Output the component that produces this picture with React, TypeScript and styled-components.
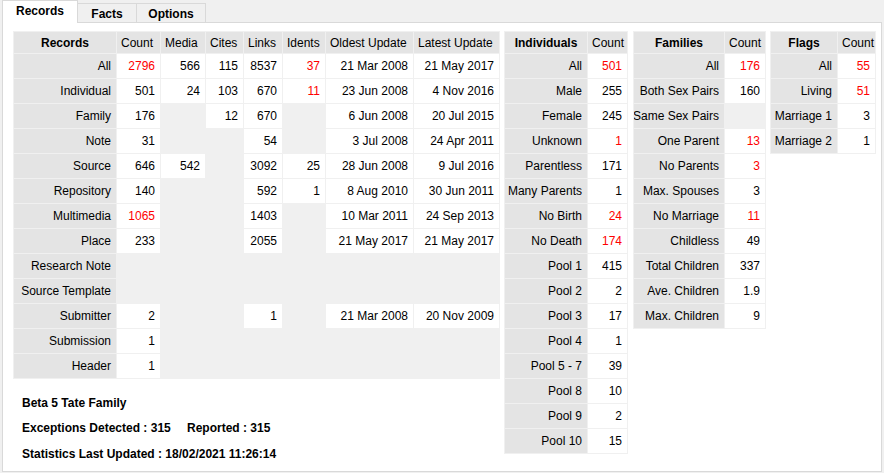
import React from "react";
import styled, { createGlobalStyle, css } from "styled-components";

const GlobalStyle = createGlobalStyle`
  html, body { margin: 0; padding: 0; background: #f0f0f0; }
  body {
    font-family: "Liberation Sans", Arial, sans-serif;
    font-size: 12px;
    color: #000;
  }
  * { box-sizing: border-box; }
`;

const Root = styled.div`
  width: 884px;
  height: 473px;
  padding: 0 0 0 2px;
  overflow: hidden;
`;

const TabStrip = styled.div`
  display: flex;
  align-items: flex-end;
  height: 22px;
  position: relative;
  z-index: 1;
`;

const Tab = styled.div<{ $active?: boolean; $w: number }>`
  width: ${(p) => p.$w}px;
  display: flex;
  align-items: center;
  justify-content: center;
  font-weight: bold;
  font-size: 12px;
  border: 1px solid #d9d9d9;
  border-bottom: none;
  ${(p) =>
    p.$active
      ? css`
          height: 23px;
          margin-bottom: -1px;
          background: #fff;
          padding-bottom: 2px;
        `
      : css`
          height: 19px;
          margin-left: -1px;
          background: #f0f0f0;
          padding-top: 1px;
        `}
`;

const Panel = styled.div`
  width: 880px;
  height: 450px;
  background: #fff;
  border: 1px solid #d9d9d9;
  padding: 8px 0 0 10px;
  display: flex;
  align-items: flex-start;
`;

const LeftColumn = styled.div`
  display: flex;
  flex-direction: column;
  margin-right: 4px;
`;

const Grid = styled.div<{ $cols: string; $ml?: number }>`
  display: grid;
  grid-template-columns: ${(p) => p.$cols};
  grid-template-rows: 21px;
  grid-auto-rows: 24px;
  gap: 1px;
  padding: 1px;
  background: #f0f0f0;
  margin-left: ${(p) => p.$ml ?? 0}px;
  align-self: flex-start;
`;

type Kind = "corner" | "head" | "rowHead" | "data" | "empty";

const Cell = styled.div<{ $kind: Kind; $red?: boolean }>`
  display: flex;
  align-items: center;
  white-space: nowrap;
  overflow: hidden;
  font-size: 12px;
  color: ${(p) => (p.$red ? "#ff0000" : "#000")};
  ${(p) => {
    switch (p.$kind) {
      case "corner":
        return css`
          background: #e4e4e4;
          justify-content: center;
          font-weight: bold;
          padding-top: 1px;
        `;
      case "head":
        return css`
          background: #e4e4e4;
          justify-content: flex-start;
          padding-left: 4px;
          padding-top: 1px;
        `;
      case "rowHead":
        return css`
          background: #e4e4e4;
          justify-content: flex-end;
          padding-right: 5px;
        `;
      case "data":
        return css`
          background: #fff;
          justify-content: flex-end;
          padding-right: 5px;
        `;
      default:
        return css`
          background: transparent;
        `;
    }
  }}
`;

const Info = styled.div`
  margin-top: 11px;
  padding-left: 9px;
  font-weight: bold;
  font-size: 12px;
`;

const InfoLine = styled.div`
  height: 25.5px;
  display: flex;
  align-items: center;
`;

const InfoItem = styled.span<{ $w?: number }>`
  display: inline-block;
  width: ${(p) => (p.$w ? `${p.$w}px` : "auto")};
`;

type Val = string | null | { v: string; red: true };
const R = (v: string): Val => ({ v, red: true });

const recordsHead = ["Count", "Media", "Cites", "Links", "Idents", "Oldest Update", "Latest Update"];
const recordsRows: [string, Val[]][] = [
  ["All", [R("2796"), "566", "115", "8537", R("37"), "21 Mar 2008", "21 May 2017"]],
  ["Individual", ["501", "24", "103", "670", R("11"), "23 Jun 2008", "4 Nov 2016"]],
  ["Family", ["176", null, "12", "670", null, "6 Jun 2008", "20 Jul 2015"]],
  ["Note", ["31", null, null, "54", null, "3 Jul 2008", "24 Apr 2011"]],
  ["Source", ["646", "542", null, "3092", "25", "28 Jun 2008", "9 Jul 2016"]],
  ["Repository", ["140", null, null, "592", "1", "8 Aug 2010", "30 Jun 2011"]],
  ["Multimedia", [R("1065"), null, null, "1403", null, "10 Mar 2011", "24 Sep 2013"]],
  ["Place", ["233", null, null, "2055", null, "21 May 2017", "21 May 2017"]],
  ["Research Note", [null, null, null, null, null, null, null]],
  ["Source Template", [null, null, null, null, null, null, null]],
  ["Submitter", ["2", null, null, "1", null, "21 Mar 2008", "20 Nov 2009"]],
  ["Submission", ["1", null, null, null, null, null, null]],
  ["Header", ["1", null, null, null, null, null, null]],
];

const individualsRows: [string, Val][] = [
  ["All", R("501")],
  ["Male", "255"],
  ["Female", "245"],
  ["Unknown", R("1")],
  ["Parentless", "171"],
  ["Many Parents", "1"],
  ["No Birth", R("24")],
  ["No Death", R("174")],
  ["Pool 1", "415"],
  ["Pool 2", "2"],
  ["Pool 3", "17"],
  ["Pool 4", "1"],
  ["Pool 5 - 7", "39"],
  ["Pool 8", "10"],
  ["Pool 9", "2"],
  ["Pool 10", "15"],
];

const familiesRows: [string, Val][] = [
  ["All", R("176")],
  ["Both Sex Pairs", "160"],
  ["Same Sex Pairs", null],
  ["One Parent", R("13")],
  ["No Parents", R("3")],
  ["Max. Spouses", "3"],
  ["No Marriage", R("11")],
  ["Childless", "49"],
  ["Total Children", "337"],
  ["Ave. Children", "1.9"],
  ["Max. Children", "9"],
];

const flagsRows: [string, Val][] = [
  ["All", R("55")],
  ["Living", R("51")],
  ["Marriage 1", "3"],
  ["Marriage 2", "1"],
];

function ValueCell({ v }: { v: Val }) {
  if (v === null) return <Cell $kind="empty" />;
  if (typeof v === "string") return <Cell $kind="data">{v}</Cell>;
  return (
    <Cell $kind="data" $red>
      {v.v}
    </Cell>
  );
}

function SimpleTable({
  title,
  rows,
  cols,
  ml,
}: {
  title: string;
  rows: [string, Val][];
  cols: string;
  ml?: number;
}) {
  return (
    <Grid $cols={cols} $ml={ml}>
      <Cell $kind="corner">{title}</Cell>
      <Cell $kind="head">Count</Cell>
      {rows.map(([label, v]) => (
        <React.Fragment key={label}>
          <Cell $kind="rowHead">{label}</Cell>
          <ValueCell v={v} />
        </React.Fragment>
      ))}
    </Grid>
  );
}

export default function App() {
  return (
    <>
      <GlobalStyle />
      <Root>
        <TabStrip>
          <Tab $active $w={76}>Records</Tab>
          <Tab $w={60}>Facts</Tab>
          <Tab $w={70}>Options</Tab>
        </TabStrip>
        <Panel>
          <LeftColumn>
            <Grid $cols="102px 43px 44px 37px 38px 42px 87px 85px">
              <Cell $kind="corner">Records</Cell>
              {recordsHead.map((h) => (
                <Cell key={h} $kind="head">
                  {h}
                </Cell>
              ))}
              {recordsRows.map(([label, vals]) => (
                <React.Fragment key={label}>
                  <Cell $kind="rowHead">{label}</Cell>
                  {vals.map((v, i) => (
                    <ValueCell key={i} v={v} />
                  ))}
                </React.Fragment>
              ))}
            </Grid>
            <Info>
              <InfoLine>Beta 5 Tate Family</InfoLine>
              <InfoLine>
                <InfoItem $w={165}>Exceptions Detected : 315</InfoItem>
                <InfoItem>Reported : 315</InfoItem>
              </InfoLine>
              <InfoLine>Statistics Last Updated : 18/02/2021 11:26:14</InfoLine>
            </Info>
          </LeftColumn>
          <SimpleTable title="Individuals" rows={individualsRows} cols="82px 39px" />
          <SimpleTable title="Families" rows={familiesRows} cols="90px 40px" ml={5} />
          <SimpleTable title="Flags" rows={flagsRows} cols="66px 37px" ml={4} />
        </Panel>
      </Root>
    </>
  );
}
